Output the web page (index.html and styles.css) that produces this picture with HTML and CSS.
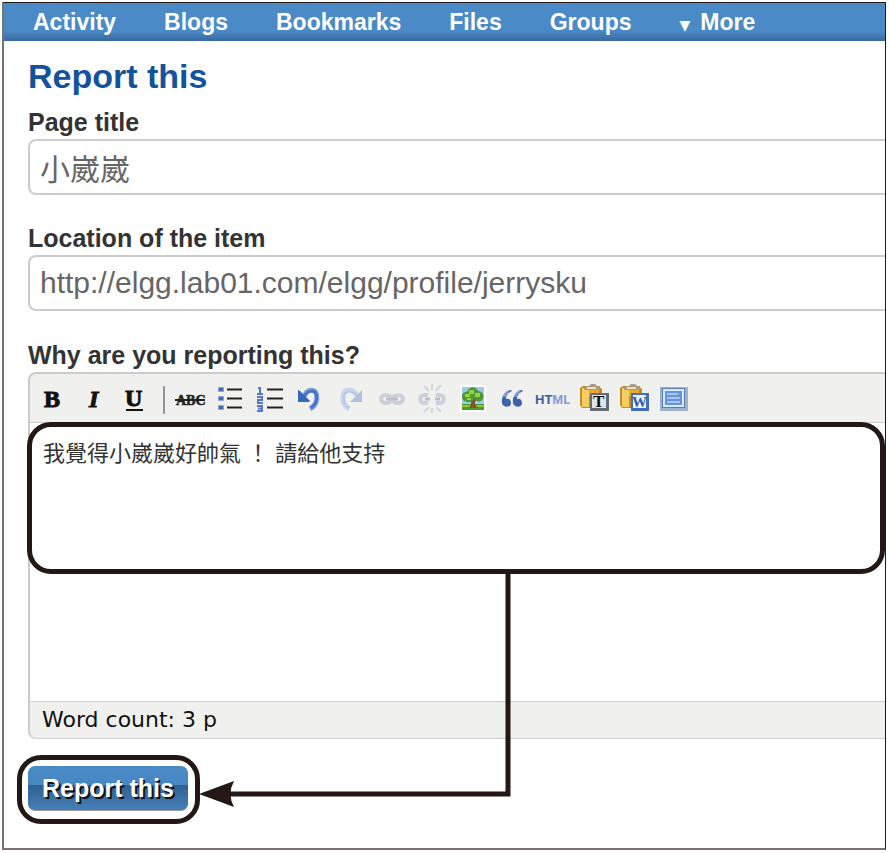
FILE: index.html
```html
<!DOCTYPE html>
<html lang="zh-Hant">
<head>
<meta charset="utf-8">
<meta name="viewport" content="width=device-width, initial-scale=1">
<title>Report this</title>
<link rel="stylesheet" href="styles.css">
</head>
<body>
<div class="frame">
  <nav class="nav">
    <a href="#">Activity</a>
    <a href="#">Blogs</a>
    <a href="#">Bookmarks</a>
    <a href="#">Files</a>
    <a href="#">Groups</a>
    <a href="#"><span class="caret">▼</span>More</a>
  </nav>
  <main class="main">
    <h1>Report this</h1>
    <form class="form">
      <div class="field">
        <label for="title">Page title</label>
        <input id="title" type="text" value="小崴崴">
      </div>
      <div class="field">
        <label for="address">Location of the item</label>
        <input id="address" type="text" value="http://elgg.lab01.com/elgg/profile/jerrysku" spellcheck="false">
      </div>
      <div class="field field-editor">
        <label for="reason">Why are you reporting this?</label>
        <div class="editor">
          <div class="toolbar">
            <button type="button" aria-label="Bold"><svg viewBox="0 0 40 30"><text class="serif" x="11" y="23">B</text></svg></button>
            <button type="button" aria-label="Italic"><svg viewBox="0 0 40 30"><text class="serif italic" x="16" y="23">I</text></svg></button>
            <button type="button" aria-label="Underline"><svg viewBox="0 0 40 30"><text class="serif" x="12" y="22">U</text><path d="M13 26h17" stroke="#111" stroke-width="2"/></svg></button>
            <span class="separator"></span>
            <button type="button" aria-label="Strikethrough"><svg viewBox="0 0 40 30"><text class="abc" x="6" y="21">ABC</text><path d="M5 16h30" stroke="#222" stroke-width="2"/></svg></button>
            <button type="button" aria-label="Bulleted list"><svg viewBox="0 0 40 30"><g fill="#4468ae" stroke="#8da8da"><rect x="8.500" y="3.500" width="5" height="4"/><rect x="8.500" y="12.500" width="5" height="4"/><rect x="8.500" y="21.500" width="5" height="4"/></g><path d="M17 5.500h15M17 14.500h15M17 23.500h15" stroke="#222" stroke-width="2"/></svg></button>
            <button type="button" aria-label="Numbered list"><svg viewBox="0 0 40 30"><path d="M8 4h2v6M7 10h6M7 13h5v3H8v3h5M7 22h5v5H7M8 24.500h4" fill="none" stroke="#5279c5" stroke-width="2"/><path d="M17 5.500h16M17 14.500h16M17 23.500h16" stroke="#222" stroke-width="2"/></svg></button>
            <button type="button" aria-label="Undo"><svg viewBox="0 0 40 30"><path d="M14 13C16 5 25 4 26.500 10C28 17 25 22 20 25" fill="none" stroke="#84a5df" stroke-width="5"/><path d="M14 13C17 6 25 5 26.500 11C27.500 17 25 21 21 24" fill="none" stroke="#4774c3" stroke-width="3"/><path d="M8 6l2 1 10 10-1 1H8z" fill="#3569bd"/></svg></button>
            <button type="button" aria-label="Redo"><svg viewBox="0 0 40 30"><path d="M27 12C23 4 14 4 13 12C12 17 14 22 19 25" fill="none" stroke="#cbd7ec" stroke-width="5"/><path d="M27 12C23 6 15 6 14 12C13 17 15 21 19 24" fill="none" stroke="#b5c7e6" stroke-width="2"/><path d="M32 6v12H20z" fill="#afc2e4"/></svg></button>
            <button type="button" aria-label="Insert link"><svg viewBox="0 0 40 30"><g fill="none" stroke="#cbd0d9" stroke-width="4"><rect x="11" y="11" width="10" height="8" rx="4"/><rect x="23" y="11" width="10" height="8" rx="4"/></g><path d="M16 15h12" stroke="#b8c0ce" stroke-width="3"/><path d="M12 10h8M25 10h8" stroke="#dce1e9"/></svg></button>
            <button type="button" aria-label="Remove link"><svg viewBox="0 0 40 30"><g fill="none" stroke="#cbd0d9" stroke-width="4"><path d="M18 11h-4c-5 0-5 8 0 8h4M26 11h4c5 0 5 8 0 8h-4"/><path d="M15 15h5M25 15h5" stroke="#b8c0ce" stroke-width="3"/></g><path d="M14 2l5 5M22 0v6M31 1l-5 6M14 28l5-5M22 29v-5M31 28l-5-5" stroke="#d3d7de" stroke-width="2"/></svg></button>
            <button type="button" aria-label="Insert image"><svg viewBox="0 0 40 30"><path d="M10 1h26v27H10z" fill="#fcfdfc"/><path d="M12 3h22v18H12z" fill="#9fc9f2"/><path d="M12 20h22v6H12z" fill="#4b9c29"/><path d="M12 21h22v2H12z" fill="#8fc737"/><path d="M21 12h4v8l3 4h-9l2-4z" fill="#85532f"/><path d="M18 14l5 4 5-4" fill="none" stroke="#85532f" stroke-width="2"/><path d="M13 16c-3-5 1-9 4-8c2-6 9-6 11-1c6 0 7 8 3 10c-3 2-5-1-7-2c-3 4-8 4-11 1z" fill="#4b9a33"/><path d="M15 10h4V6h5v4h-4v3h-5zM25 9h5v4h-5zM17 14h4v2h-4z" fill="#9ad13c"/></svg></button>
            <button type="button" aria-label="Quote"><svg viewBox="0 0 40 30"><g fill="#3c63a9"><path d="M21 6c-6 1-10 7-9 13c1 5 9 5 9 0c0-3-2-5-5-4c0-4 2-6 6-8z"/><path d="M32 6c-6 1-10 7-9 13c1 5 9 5 9 0c0-3-2-5-5-4c0-4 2-6 6-8z"/></g><path d="M14 13q1-4 5-6M25 13q1-4 5-6" fill="none" stroke="#84a2d4" stroke-width="2"/></svg></button>
            <button type="button" aria-label="Edit HTML"><svg viewBox="0 0 40 30"><text class="html" x="5" y="20"><tspan fill="#3c5d9e">HT</tspan><tspan fill="#829bd9">ML</tspan></text></svg></button>
            <button type="button" aria-label="Paste as plain text"><svg viewBox="0 0 40 30"><path d="M10 4l3-2h15l4 3v19H12l-2-3z" fill="#c58b2a"/><path d="M12 4h7v19h-7z" fill="#f6cd60"/><path d="M19 4h10v8H19z" fill="#e9a936"/><path d="M14 5l2-3h3l2-2h4l2 2h3v4H14z" fill="#a79b80"/><path d="M17 4h9" stroke="#e8dfc7" stroke-width="2"/><path d="M20 9h19v18H20z" fill="#666c73"/><path d="M22 11h14v13H22z" fill="#dfe4e9"/><text class="letter" x="23" y="23">T</text></svg></button>
            <button type="button" aria-label="Paste from Word"><svg viewBox="0 0 40 30"><path d="M10 4l3-2h15l4 3v19H12l-2-3z" fill="#c58b2a"/><path d="M12 4h7v19h-7z" fill="#f6cd60"/><path d="M19 4h10v8H19z" fill="#e9a936"/><path d="M14 5l2-3h3l2-2h4l2 2h3v4H14z" fill="#a79b80"/><path d="M17 4h9" stroke="#e8dfc7" stroke-width="2"/><path d="M21 9h18v18H21z" fill="#446fb6"/><path d="M23 11h13v13H23z" fill="#edf3fc"/><text class="letter word" x="22" y="23">W</text></svg></button>
            <button type="button" aria-label="Full screen"><svg viewBox="0 0 40 30"><path d="M10 3h28v24H10z" fill="#9fb2ca"/><path d="M12 4h23v20H12z" fill="#557fbb"/><path d="M13 5h21v18H13z" fill="#dceaff"/><path d="M15 7h17v14H15z" fill="#6593dc"/><path d="M17 10h11M17 14h13M17 18h13" stroke="#a9c5f1" stroke-width="2"/></svg></button>
          </div>
          <textarea id="reason" spellcheck="false">我覺得小崴崴好帥氣 ！ 請給他支持</textarea>
          <div class="status">Word count: 3 p</div>
          <div class="ring ring-editor"></div>
        </div>
      </div>
      <div class="actions">
        <button class="submit" type="submit">Report this</button>
        <div class="ring ring-submit"></div>
        <svg class="arrow" viewBox="0 0 312 238" aria-hidden="true"><path d="M309 0v223H30" fill="none" stroke="#231815" stroke-width="5"/><path d="M0 223L35 210Q28 223 35 236z" fill="#231815"/></svg>
      </div>
    </form>
  </main>
</div>
</body>
</html>
```
FILE: styles.css
```css
* {
  box-sizing: border-box;
}

body {
  margin: 2px 3px 2px 2px;
  background: #fff;
  color: #333;
  font-family: "Liberation Sans", "Noto Sans CJK TC", sans-serif;
}

.frame {
  overflow: hidden;
  border: 1px solid #231815;
  border-bottom: 2px solid #7b7270;
  border-left: 2px solid #7b7270;
}

.nav {
  display: flex;
  height: 38px;
  padding-left: 5px;
  background: linear-gradient(#4a8ac6 0, #4a8ac6 28px, #38699f 38px);
}

.nav a {
  padding: 0 24px;
  color: #fff;
  font-size: 23px;
  font-weight: bold;
  line-height: 38px;
  text-decoration: none;
  white-space: nowrap;
}

.caret {
  margin-right: 10px;
  font-family: "DejaVu Sans", sans-serif;
  font-size: 14px;
}

.main {
  padding: 15px 0 37px 24px;
}

h1 {
  margin: 0 0 11px;
  color: #11539c;
  font-size: 34px;
  line-height: 40px;
}

.field {
  margin-bottom: 28px;
}

.field label {
  display: block;
  margin-bottom: 2px;
  font-size: 25px;
  font-weight: bold;
  line-height: 30px;
}

.field input {
  display: block;
  width: calc(100% + 12px);
  height: 56px;
  padding: 0 10px;
  border: 2px solid #ccc;
  border-radius: 8px;
  background: #fff;
  color: #666;
  font-family: inherit;
  font-size: 30px;
}

.field-editor {
  margin: 29px 0 27px;
}

.editor {
  position: relative;
  width: calc(100% + 12px);
  border: 2px solid #ccc;
  border-bottom-width: 1px;
  border-radius: 8px;
  background: #f0f0ee;
}

.toolbar {
  display: flex;
  padding: 10px 3px 8px;
  border-bottom: 1px solid #ccc;
}

.toolbar button {
  flex: none;
  width: 40px;
  height: 30px;
  padding: 0;
  border: 0;
  background: none;
}

.toolbar svg {
  display: block;
  width: 40px;
  height: 30px;
}

.separator {
  width: 2px;
  height: 28px;
  margin: 2px 5px 0 10px;
  background: #9a93a0;
}

.serif {
  font: bold 24px "Liberation Serif", serif;
  fill: #111;
  stroke: #111;
}

.italic {
  font-style: italic;
}

.abc {
  font: bold 14px "Liberation Serif", serif;
  fill: #222;
  stroke: #222;
  stroke-width: 0.5;
}

.html {
  font: bold 13px "Liberation Sans", sans-serif;
}

.letter {
  font: bold 17px "Liberation Serif", serif;
  fill: #111;
}

.word {
  font-size: 15px;
  fill: #335da8;
}

.editor textarea {
  display: block;
  width: 100%;
  height: 278px;
  padding: 15px 13px;
  border: 0;
  resize: none;
  background: #fff;
  color: #333;
  font-family: inherit;
  font-size: 22px;
  line-height: 32px;
}

.status {
  padding-left: 12px;
  border-top: 1px solid #ccc;
  border-radius: 0 0 8px 8px;
  color: #111;
  font-family: "DejaVu Sans", sans-serif;
  font-size: 22px;
  line-height: 36px;
}

.actions {
  display: flex;
  position: relative;
}

.submit {
  height: 45px;
  padding: 0 14px;
  border: 0;
  border-bottom: 1px solid #999;
  border-radius: 7px;
  background: linear-gradient(#4a8ac6 0, #4688c4 19px, #315f8f 19px, #4580b9 100%);
  color: #fff;
  font-family: inherit;
  font-size: 25px;
  font-weight: bold;
  text-shadow: 2px 2px 0 #111;
}

/* Callouts drawn over the form */
.ring {
  position: absolute;
  border: 5px solid #231815;
  border-radius: 24px;
  pointer-events: none;
}

.ring-editor {
  top: 48px;
  right: 10px;
  left: -3px;
  height: 152px;
}

.ring-submit {
  top: -11px;
  left: -11px;
  width: 183px;
  height: 69px;
}

.arrow {
  position: absolute;
  bottom: 2px;
  left: 171px;
  width: 312px;
  height: 238px;
  pointer-events: none;
}
```
